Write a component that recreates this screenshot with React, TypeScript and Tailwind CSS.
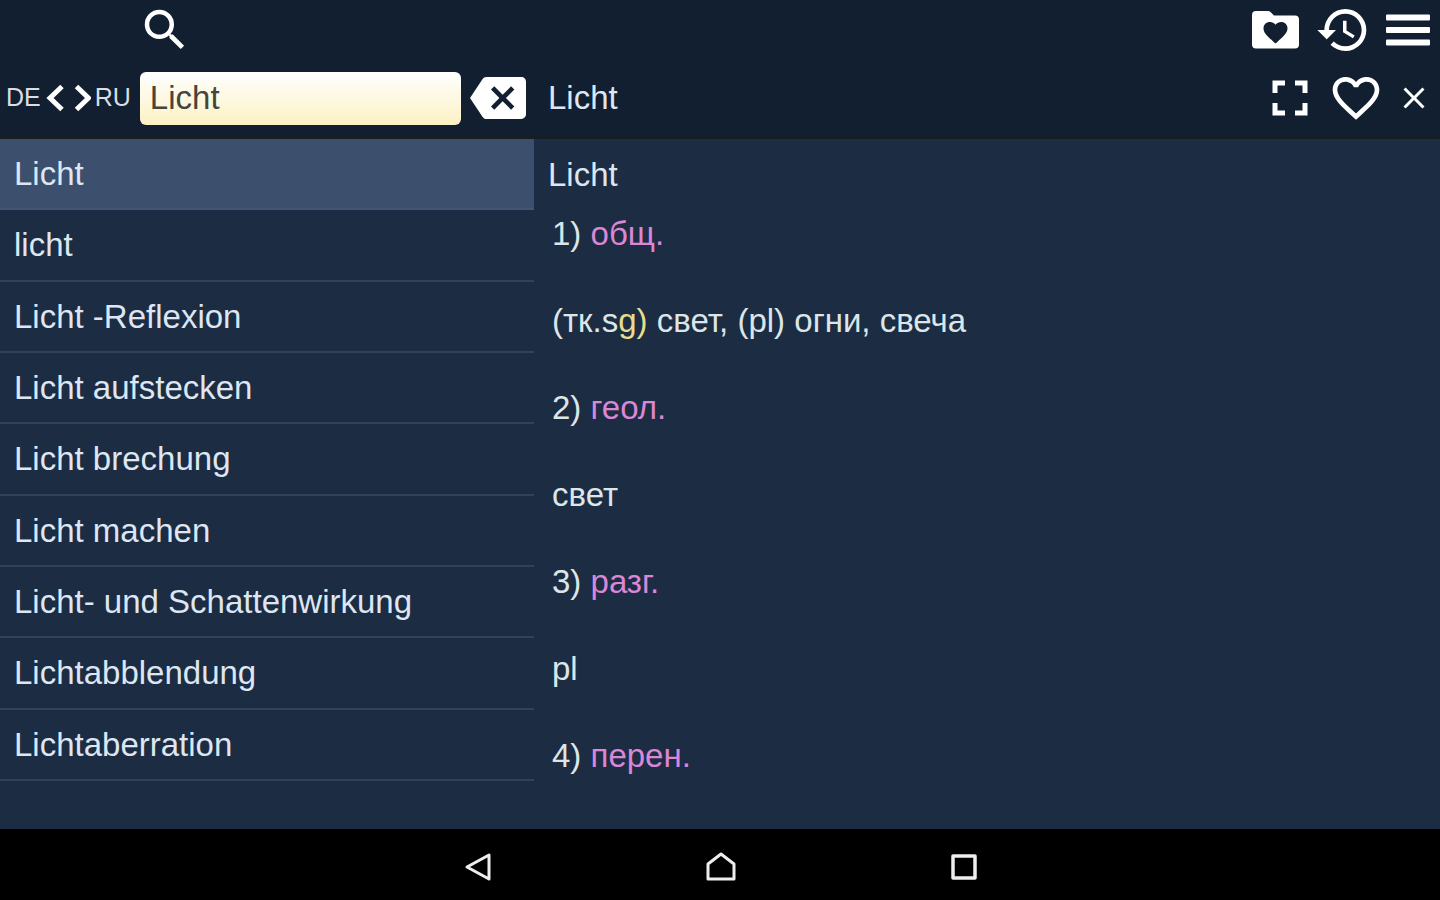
import { useState } from "react";
import {
  MdBackspace,
  MdClose,
  MdFavoriteBorder,
  MdFullscreen,
  MdHistory,
  MdSearch,
} from "react-icons/md";

const words = [
  "Licht",
  "licht",
  "Licht -Reflexion",
  "Licht aufstecken",
  "Licht brechung",
  "Licht machen",
  "Licht- und Schattenwirkung",
  "Lichtabblendung",
  "Lichtaberration",
];

function FolderHeart() {
  return (
    <svg width="48" height="38" viewBox="0 0 48 38" aria-hidden="true">
      <path
        fill="#fff"
        fillRule="evenodd"
        d="M4 0h12q1.500 0 2.500 1l3.500 3.500h21q4 0 4 4v25q0 4-4 4H4q-4 0-4-4V4q0-4 4-4z M23.500 32.500l-1.800-1.600C15.200 25 11.500 21.800 11.500 17.200c0-3.500 2.800-6.200 6.300-6.200 2.200 0 4.300 1 5.700 2.700 1.400-1.700 3.500-2.700 5.700-2.700 3.500 0 6.300 2.700 6.300 6.200 0 4.600-3.700 7.800-10.200 13.700z"
      />
    </svg>
  );
}

function MenuBars() {
  return (
    <svg width="44" height="32" viewBox="0 0 44 32" aria-hidden="true" fill="#fff">
      <rect width="44" height="6" y="0.500" rx="1" />
      <rect width="44" height="6" y="13" rx="1" />
      <rect width="44" height="6" y="25.500" rx="1" />
    </svg>
  );
}

function Chevrons() {
  return (
    <svg
      width="46"
      height="28"
      viewBox="0 0 46 28"
      aria-hidden="true"
      fill="none"
      stroke="#fff"
      strokeWidth="5"
    >
      <path d="M17 2.500L5 14l12 11.500M31.500 2.500l12 11.500-12 11.500" />
    </svg>
  );
}

function Sense({ number, label }: { number: number; label: string }) {
  return (
    <p>
      {number}) <span className="text-[#d987d6]">{label}</span>
    </p>
  );
}

export default function App() {
  const [query, setQuery] = useState("Licht");
  const [selected, setSelected] = useState(0);

  return (
    <div className="flex min-h-screen flex-col bg-[#1c2c42] font-['Liberation_Sans',Arial,sans-serif] text-[33px] text-[#dde6f2]">
      <header className="border-b-3 border-[#161d25] bg-[#121f30] text-white">
        <div className="flex h-15 items-center justify-between pr-2.5 pl-[138px]">
          <button type="button" aria-label="Search">
            <MdSearch size={54} />
          </button>
          <div className="flex items-center gap-[15px]">
            <button type="button" aria-label="Favorites">
              <FolderHeart />
            </button>
            <button type="button" aria-label="History">
              <MdHistory size={56} />
            </button>
            <button type="button" aria-label="Menu">
              <MenuBars />
            </button>
          </div>
        </div>
        <div className="grid h-19 grid-cols-[534fr_906fr]">
          <div className="flex min-w-0 items-center gap-[9px] pr-2 pl-1.5">
            <button
              type="button"
              aria-label="Swap languages DE RU"
              className="flex shrink-0 items-center gap-1 text-[25px] text-[#d9dde4]"
            >
              <span>DE</span>
              <Chevrons />
              <span>RU</span>
            </button>
            <input
              type="text"
              aria-label="Word"
              value={query}
              onChange={(e) => setQuery(e.target.value)}
              className="h-[53px] min-w-0 flex-1 rounded-md bg-linear-to-b from-white to-[#fcf1c3] px-2.5 text-[#45453d] outline-none"
            />
            <button type="button" aria-label="Clear" onClick={() => setQuery("")}>
              <MdBackspace size={56} />
            </button>
          </div>
          <div className="flex items-center gap-2 pr-1 pl-3.5">
            <h1 className="flex-1 text-[#dde6f2]">Licht</h1>
            <button type="button" aria-label="Full screen">
              <MdFullscreen size={60} />
            </button>
            <button type="button" aria-label="Add to favorites">
              <MdFavoriteBorder size={56} />
            </button>
            <button type="button" aria-label="Close" className="flex w-11 justify-center">
              <MdClose size={36} />
            </button>
          </div>
        </div>
      </header>

      <main className="grid flex-1 grid-cols-[534fr_906fr]">
        <ul className="grid h-[642px] auto-rows-fr">
          {words.map((word, i) => (
            <li key={word} className="flex">
              <button
                type="button"
                onClick={() => setSelected(i)}
                className={
                  i === selected
                    ? "flex-1 border-b-2 border-[#435673] bg-[#3c506e] pl-3.5 text-left"
                    : "flex-1 border-b-2 border-[#304159] pl-3.5 text-left"
                }
              >
                {word}
              </button>
            </li>
          ))}
        </ul>
        <article className="pl-3.5">
          <h2 className="mb-[5px] leading-[71px]">Licht</h2>
          <div className="flex flex-col gap-[49px] pl-1 leading-[38px] text-[#dce6e8]">
            <Sense number={1} label="общ." />
            <p>
              (тк.s<span className="text-[#e6de8c]">g)</span> свет, (pl) огни, свеча
            </p>
            <Sense number={2} label="геол." />
            <p>свет</p>
            <Sense number={3} label="разг." />
            <p>pl</p>
            <Sense number={4} label="перен." />
          </div>
        </article>
      </main>

      <nav className="flex h-[71px] items-center justify-center gap-[213px] bg-black pt-1 pl-0.5">
        <button type="button" aria-label="Back">
          <svg width="30" height="32" viewBox="0 0 30 32" fill="none" stroke="#eee" strokeWidth="3" strokeLinejoin="round">
            <path d="M26 4v24L4 16z" />
          </svg>
        </button>
        <button type="button" aria-label="Home">
          <svg width="30" height="32" viewBox="0 0 30 32" fill="none" stroke="#eee" strokeWidth="3" strokeLinejoin="round">
            <path d="M2 13L15 3l13 10v15H2z" />
          </svg>
        </button>
        <button type="button" aria-label="Recent apps">
          <svg width="30" height="32" viewBox="0 0 30 32" fill="none" stroke="#eee" strokeWidth="3.500" strokeLinejoin="round">
            <path d="M4 5h22v22H4z" />
          </svg>
        </button>
      </nav>
    </div>
  );
}
